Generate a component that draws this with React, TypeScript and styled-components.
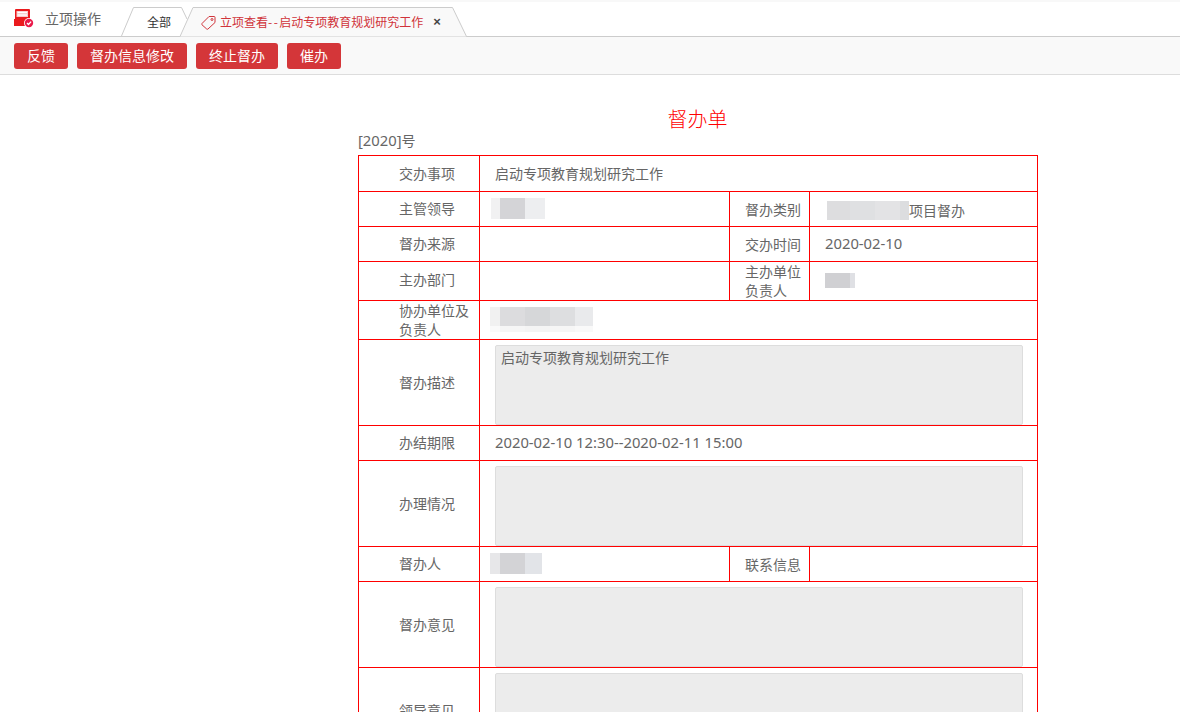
import React from 'react';
import styled, { createGlobalStyle } from 'styled-components';

const Global = createGlobalStyle`
  html, body { margin: 0; padding: 0; height: 712px; overflow: hidden; background: #fff; }
  body { font-family: "Noto Sans CJK SC", "Noto Sans", sans-serif; font-size: 14px; color: #666; }
`;

const TabBar = styled.div`
  height: 36px; border-bottom: 1px solid #ccc; display: flex; align-items: stretch; position: relative; padding-left: 14px;
  box-shadow: inset 0 2px 0 #f8f8f8;
`;
const Brand = styled.div`
  display: flex; align-items: center; width: 106px; color: #666; font-size: 14px; gap: 11px; height: 36px;
`;
const BrandName = styled.span`
  line-height: 16px; margin-top: -1px;
`;
const Tabs = styled.div`
  display: flex; position: relative; flex: 1;
`;
const TabPlain = styled.div`
  position: absolute; left: 27px; top: 14px; color: #333; font-size: 12px; line-height: 16px;
`;
const TabActive = styled.div`
  position: absolute; left: 81px; top: 14px; color: #d0333a; font-size: 12px; line-height: 16px; display: flex; align-items: center; gap: 4px; white-space: nowrap;
`;
const Dashes = styled.span`
  letter-spacing: 1.5px;
`;
const TabClose = styled.span`
  color: #444; font-size: 13px; font-weight: 700; margin-left: 6px; font-family: "Liberation Sans", sans-serif;
`;
const TabOutline = styled.svg`
  position: absolute; left: 0; top: 0; pointer-events: none;
`;
const Toolbar = styled.div`
  height: 37px; background: #f9f9f9; border-bottom: 1px solid #ddd; display: flex; align-items: center; gap: 9px; padding-left: 14px; box-sizing: content-box;
`;
const ActionButton = styled.button`
  height: 26px; padding: 0 13px 2px; border: 0; border-radius: 3px; background: #d43639; color: #fff; font-family: inherit; font-size: 14px; line-height: 24px;
`;
const Content = styled.main`
  width: 679px; margin-left: 358px;
`;
const Title = styled.h1`
  margin: 0; padding-top: 29px; font-weight: 300; font-size: 20px; line-height: 30px; color: #f00; text-align: center;
`;
const DocNo = styled.div`
  font-size: 14px; line-height: 20px; height: 25px; margin-top: -4px; color: #666;
`;
const Sheet = styled.table`
  border-collapse: collapse; table-layout: fixed; width: 679px;
  td { border: 1px solid #f00; padding: 0; font-size: 14px; color: #666; vertical-align: middle; }
`;
const Row = styled.tr<{ $h: number }>`
  height: ${p => p.$h}px;
`;
const Label = styled.td<{ $pb?: number }>`
  text-align: left; padding-left: 40px !important; padding-bottom: ${p => p.$pb ?? 1}px !important; line-height: 19px;
`;
const Value = styled.td`
  padding-left: 15px !important; padding-bottom: 1px !important;
`;
const DateValue = styled(Value)`
  padding-bottom: 3px !important;
`;
const StackedValue = styled.td`
  padding-left: 15px !important; line-height: 19px;
`;
const Digits = styled.span`
  font-family: "Noto Sans", sans-serif; font-size: 14.8px;
`;
const Area = styled.div`
  width: 528px; height: 80px; margin-top: 5px; box-sizing: border-box; background: #ececec; border: 1px solid #ddd; border-radius: 2px; padding: 2px 5px; line-height: 18px;
`;
const AreaCell = styled.td`
  padding-left: 15px !important; vertical-align: top !important;
`;
const Blur = styled.div<{ $ml?: number }>`
  display: flex; margin-left: ${p => p.$ml ?? 0}px;
`;
const BlurCell = styled.i<{ $w: number; $h: number; $c: string }>`
  display: block; width: ${p => p.$w}px; height: ${p => p.$h}px; background: ${p => p.$c};
`;
const InlineWrap = styled.div`
  display: flex; align-items: center; white-space: nowrap; padding-top: 3px;
`;
const BlurStack = styled.div`
  display: flex; flex-direction: column;
`;

type Cell = [number, number, string];
const Mosaic = ({ cells, ml }: { cells: Cell[]; ml?: number }) => (
  <Blur $ml={ml}>
    {cells.map(([w, h, c], i) => <BlurCell key={i} $w={w} $h={h} $c={c} />)}
  </Blur>
);

const BrandIcon = () => (
  <svg width="20" height="20" viewBox="0 0 20 20">
    <path d="M2 1h13a1 1 0 0 1 1 1v9h1v7H0v-7h1V2a1 1 0 0 1 1-1z" fill="#ea1a1d" />
    <rect x="2.5" y="3" width="11.5" height="6" fill="#f7c9c9" />
    <rect x="3.5" y="3.8" width="9.5" height="1.3" fill="#fff" />
    <rect x="3.5" y="6.4" width="9.5" height="1.3" fill="#fff" />
    <circle cx="15" cy="15" r="5" fill="#fff" />
    <circle cx="15" cy="15" r="4.2" fill="#ea1a4a" />
    <path d="M13 15l1.5 1.5 2.6-2.9" fill="none" stroke="#fff" strokeWidth="1.3" />
  </svg>
);

const TagIcon = () => (
  <svg width="15" height="15" viewBox="0 0 15 15" fill="none" stroke="#d0333a" strokeWidth="1">
    <path d="M1 8.5 8 1.5h5.2a.8.8 0 0 1 .8.8V7.5l-7 6.5a1 1 0 0 1-1.3 0L1 9.8a1 1 0 0 1 0-1.3z" />
    <circle cx="11" cy="4.5" r="1" />
  </svg>
);

export default function App() {
  return (
    <>
      <Global />
      <TabBar>
        <Brand><BrandIcon /><BrandName>立项操作</BrandName></Brand>
        <Tabs>
          <TabOutline width="360" height="37" viewBox="0 0 360 37" fill="none" stroke="#ccc">
            <path d="M1.5 36 L13.5 7.5 H61.5 L67 19" fill="#fff" stroke="none" />
            <path d="M1.5 36 L13.5 7.5 H61.5 L67 19" />
            <path d="M60 36.5 L73 7.5 H332.5 L346.5 36.5 Z" stroke="none" fill="#f9f9f9" />
            <path d="M60 36.5 L73 7.5 H332.5 L346.5 36.5" />
          </TabOutline>
          <TabPlain>全部</TabPlain>
          <TabActive><TagIcon /><span>立项查看<Dashes>--</Dashes>启动专项教育规划研究工作</span><TabClose>×</TabClose></TabActive>
        </Tabs>
      </TabBar>
      <Toolbar>
        <ActionButton>反馈</ActionButton>
        <ActionButton>督办信息修改</ActionButton>
        <ActionButton>终止督办</ActionButton>
        <ActionButton>催办</ActionButton>
      </Toolbar>
      <Content>
        <Title>督办单</Title>
        <DocNo><Digits>[2020]</Digits>号</DocNo>
        <Sheet>
          <colgroup>
            <col width="121" /><col width="250" /><col width="80" /><col width="228" />
          </colgroup>
          <tbody>
            <Row $h={36}><Label>交办事项</Label><Value colSpan={3}>启动专项教育规划研究工作</Value></Row>
            <Row $h={35}>
              <Label>主管领导</Label>
              <Value><Mosaic ml={-4} cells={[[9, 21, '#f1f1f2'], [25, 21, '#d4d4d7'], [20, 21, '#edeef0']]} /></Value>
              <Value>督办类别</Value>
              <Value><InlineWrap><Mosaic ml={2} cells={[[23, 19, '#dddddf'], [25, 19, '#dfe0e2'], [25, 19, '#e3e3e5'], [9, 19, '#dcdddf']]} /><span>项目督办</span></InlineWrap></Value>
            </Row>
            <Row $h={35}><Label>督办来源</Label><Value /><Value>交办时间</Value><DateValue><Digits>2020-02-10</Digits></DateValue></Row>
            <Row $h={39}>
              <Label $pb={3}>主办部门</Label><Value />
              <StackedValue>主办单位<br />负责人</StackedValue>
              <Value><Mosaic cells={[[25, 15, '#d0d0d3'], [5, 15, '#dfe0e4']]} /></Value>
            </Row>
            <Row $h={39}>
              <Label $pb={0}>协办单位及<br />负责人</Label>
              <Value colSpan={3}>
                <BlurStack>
                  <Mosaic ml={-5} cells={[[10, 19, '#f1f1f1'], [25, 19, '#dcdcde'], [25, 19, '#d6d7d9'], [25, 19, '#dddee0'], [18, 19, '#e9eaec']]} />
                  <Mosaic ml={-5} cells={[[10, 6, '#fafafa'], [25, 6, '#f6f6f6'], [25, 6, '#f4f4f4'], [25, 6, '#f6f6f6'], [18, 6, '#f9f9f9']]} />
                </BlurStack>
              </Value>
            </Row>
            <Row $h={86}>
              <Label>督办描述</Label>
              <AreaCell colSpan={3}><Area>启动专项教育规划研究工作</Area></AreaCell>
            </Row>
            <Row $h={35}><Label>办结期限</Label><DateValue colSpan={3}><Digits>2020-02-10 12:30--2020-02-11 15:00</Digits></DateValue></Row>
            <Row $h={86}><Label>办理情况</Label><AreaCell colSpan={3}><Area /></AreaCell></Row>
            <Row $h={35}>
              <Label>督办人</Label>
              <Value><Mosaic ml={-5} cells={[[10, 21, '#e7e7e9'], [25, 21, '#d3d3d6'], [17, 21, '#e2e4e8']]} /></Value>
              <Value>联系信息</Value><Value />
            </Row>
            <Row $h={86}><Label>督办意见</Label><AreaCell colSpan={3}><Area /></AreaCell></Row>
            <Row $h={86}><Label>领导意见</Label><AreaCell colSpan={3}><Area /></AreaCell></Row>
          </tbody>
        </Sheet>
      </Content>
    </>
  );
}
